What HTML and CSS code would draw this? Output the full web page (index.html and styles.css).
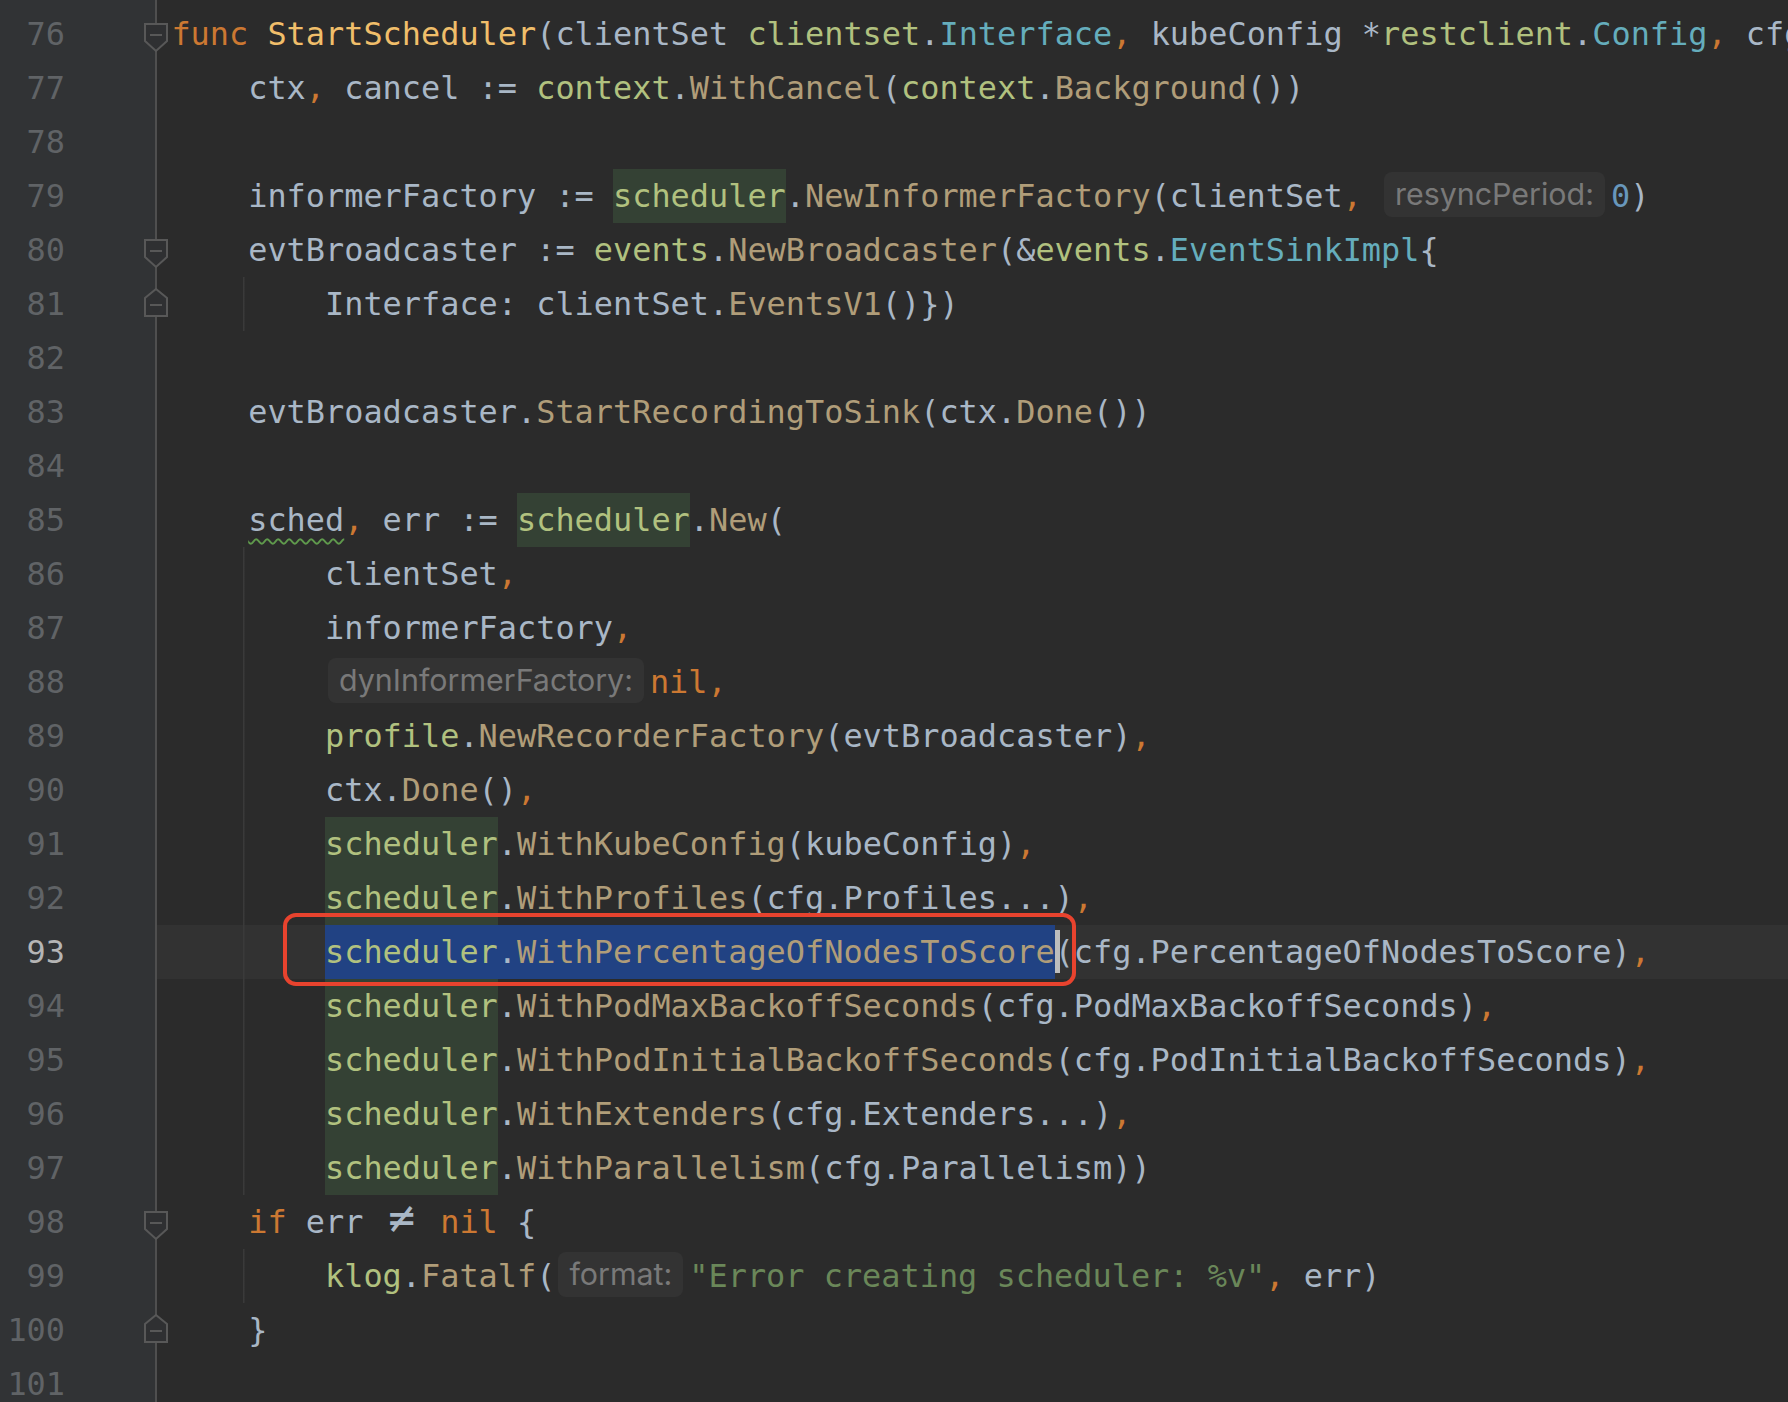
FILE: index.html
```html
<!DOCTYPE html>
<html>
  <head>
    <meta charset="utf-8" />
    <link rel="stylesheet" href="styles.css">
  </head>
  <body>
    <div class="editor">
      <div class="row"><div class="gutter"><span class="ln">76</span><svg class="fold fold-down" width="26" height="30" viewBox="0 0 26 30"><path d="M2 1H24V18L13 28L2 18Z"/><line x1="7" y1="12" x2="19" y2="12"/></svg></div><div class="code"><span class="k">func</span> <span class="fn">StartScheduler</span>(clientSet <span class="pk">clientset</span>.<span class="ty">Interface</span><span class="p">,</span> kubeConfig *<span class="pk">restclient</span>.<span class="ty">Config</span><span class="p">,</span> cfg *<span class="pk">kubeschedulerconfig</span>.<span class="ty">CompletedConfig</span>) {</div></div>
      <div class="row"><div class="gutter"><span class="ln">77</span></div><div class="code">    ctx<span class="p">,</span> cancel := <span class="pk">context</span>.<span class="fc">WithCancel</span>(<span class="pk">context</span>.<span class="fc">Background</span>())</div></div>
      <div class="row"><div class="gutter"><span class="ln">78</span></div><div class="code"></div></div>
      <div class="row"><div class="gutter"><span class="ln">79</span></div><div class="code">    informerFactory := <span class="pk hl">scheduler</span>.<span class="fc">NewInformerFactory</span>(clientSet<span class="p">,</span> <span class="hint">resyncPeriod:</span><span class="n">0</span>)</div></div>
      <div class="row"><div class="gutter"><span class="ln">80</span><svg class="fold fold-down" width="26" height="30" viewBox="0 0 26 30"><path d="M2 1H24V18L13 28L2 18Z"/><line x1="7" y1="12" x2="19" y2="12"/></svg></div><div class="code">    evtBroadcaster := <span class="pk">events</span>.<span class="fc">NewBroadcaster</span>(&amp;<span class="pk">events</span>.<span class="ty">EventSinkImpl</span>{</div></div>
      <div class="row"><div class="gutter"><span class="ln">81</span><svg class="fold fold-up" width="26" height="30" viewBox="0 0 26 30"><path d="M13 1L24 10V28H2V10Z"/><line x1="7" y1="17" x2="19" y2="17"/></svg></div><div class="code guide">        Interface: clientSet.<span class="fc">EventsV1</span>()})</div></div>
      <div class="row"><div class="gutter"><span class="ln">82</span></div><div class="code"></div></div>
      <div class="row"><div class="gutter"><span class="ln">83</span></div><div class="code">    evtBroadcaster.<span class="fc">StartRecordingToSink</span>(ctx.<span class="fc">Done</span>())</div></div>
      <div class="row"><div class="gutter"><span class="ln">84</span></div><div class="code"></div></div>
      <div class="row"><div class="gutter"><span class="ln">85</span></div><div class="code">    <span class="warn">sched</span><span class="p">,</span> err := <span class="pk hl">scheduler</span>.<span class="fc">New</span>(</div></div>
      <div class="row"><div class="gutter"><span class="ln">86</span></div><div class="code guide">        clientSet<span class="p">,</span></div></div>
      <div class="row"><div class="gutter"><span class="ln">87</span></div><div class="code guide">        informerFactory<span class="p">,</span></div></div>
      <div class="row"><div class="gutter"><span class="ln">88</span></div><div class="code guide">        <span class="hint">dynInformerFactory:</span><span class="k">nil</span><span class="p">,</span></div></div>
      <div class="row"><div class="gutter"><span class="ln">89</span></div><div class="code guide">        <span class="pk">profile</span>.<span class="fc">NewRecorderFactory</span>(evtBroadcaster)<span class="p">,</span></div></div>
      <div class="row"><div class="gutter"><span class="ln">90</span></div><div class="code guide">        ctx.<span class="fc">Done</span>()<span class="p">,</span></div></div>
      <div class="row"><div class="gutter"><span class="ln">91</span></div><div class="code guide">        <span class="pk hl">scheduler</span>.<span class="fc">WithKubeConfig</span>(kubeConfig)<span class="p">,</span></div></div>
      <div class="row"><div class="gutter"><span class="ln">92</span></div><div class="code guide">        <span class="pk hl">scheduler</span>.<span class="fc">WithProfiles</span>(cfg.Profiles...)<span class="p">,</span></div></div>
      <div class="row"><div class="gutter"><span class="ln current">93</span></div><div class="code guide current-line">        <span class="sel"><span class="pk">scheduler</span>.<span class="fc">WithPercentageOfNodesToScore</span></span><span class="caret"></span>(cfg.PercentageOfNodesToScore)<span class="p">,</span></div></div>
      <div class="row"><div class="gutter"><span class="ln">94</span></div><div class="code guide">        <span class="pk hl">scheduler</span>.<span class="fc">WithPodMaxBackoffSeconds</span>(cfg.PodMaxBackoffSeconds)<span class="p">,</span></div></div>
      <div class="row"><div class="gutter"><span class="ln">95</span></div><div class="code guide">        <span class="pk hl">scheduler</span>.<span class="fc">WithPodInitialBackoffSeconds</span>(cfg.PodInitialBackoffSeconds)<span class="p">,</span></div></div>
      <div class="row"><div class="gutter"><span class="ln">96</span></div><div class="code guide">        <span class="pk hl">scheduler</span>.<span class="fc">WithExtenders</span>(cfg.Extenders...)<span class="p">,</span></div></div>
      <div class="row"><div class="gutter"><span class="ln">97</span></div><div class="code guide">        <span class="pk hl">scheduler</span>.<span class="fc">WithParallelism</span>(cfg.Parallelism))</div></div>
      <div class="row"><div class="gutter"><span class="ln">98</span><svg class="fold fold-down" width="26" height="30" viewBox="0 0 26 30"><path d="M2 1H24V18L13 28L2 18Z"/><line x1="7" y1="12" x2="19" y2="12"/></svg></div><div class="code">    <span class="k">if</span> err <span class="neq">≠</span> <span class="k">nil</span> {</div></div>
      <div class="row"><div class="gutter"><span class="ln">99</span></div><div class="code guide">        <span class="pk">klog</span>.<span class="fc">Fatalf</span>(<span class="hint">format:</span><span class="s">"Error creating scheduler: %v"</span><span class="p">,</span> err)</div></div>
      <div class="row"><div class="gutter"><span class="ln">100</span><svg class="fold fold-up" width="26" height="30" viewBox="0 0 26 30"><path d="M13 1L24 10V28H2V10Z"/><line x1="7" y1="17" x2="19" y2="17"/></svg></div><div class="code">    }</div></div>
      <div class="row"><div class="gutter"><span class="ln">101</span></div><div class="code"></div></div>

      <div class="annotation"></div>
    </div>
  </body>
</html>
```

FILE: styles.css
```css
body {
  margin: 0;
  padding: 0;
  width: 1788px;
  height: 1402px;
  overflow: hidden;
  background: #2b2b2b;
}

.editor {
  position: relative;
  height: 1402px;
  padding-top: 7px;
  box-sizing: border-box;
  overflow: hidden;
  background: linear-gradient(
    to right,
    #313335 0,
    #313335 155px,
    #4f4f4f 155px,
    #4f4f4f 157px,
    #2b2b2b 157px
  );
  font-family: "DejaVu Sans Mono", monospace;
  font-size: 31.9px;
  line-height: 54px;
  color: #a9b7c6;
}

.row {
  display: flex;
  height: 54px;
}

.gutter {
  position: relative;
  flex: 0 0 157px;
}

.ln {
  display: block;
  width: 65px;
  text-align: right;
  color: #606366;
}

.ln.current {
  color: #b5b5b5;
}

/* fold markers sit over the gutter edge */
.fold {
  position: absolute;
  left: 143px;
  fill: #2f3032;
  stroke: #585858;
  stroke-width: 2;
}

.fold-down {
  top: 16px;
}

.fold-up {
  top: 11px;
}

.code {
  flex: 1;
  padding-left: 14.4px;
  white-space: pre;
  overflow: hidden;
}

.code.guide {
  background: linear-gradient(#3a3a3a, #3a3a3a) no-repeat 86px 0 / 1.5px 100%;
}

.code.current-line {
  background: linear-gradient(#3a3a3a, #3a3a3a) no-repeat 86px 0 / 1.5px 100%,
    #323232;
}

/* syntax colours */
.k {
  color: #cc7832;
}

.p {
  color: #cc7832;
}

.fn {
  color: #f0be6a;
}

.pk {
  color: #b1c17f;
}

.fc {
  color: #b09d79;
}

.ty {
  color: #65adbc;
}

.s {
  color: #6a8759;
}

.n {
  color: #6897bb;
}

.hl {
  display: inline-block;
  background: #344134;
}

.sel {
  display: inline-block;
  background: #214283;
}

.caret {
  display: inline-block;
  width: 5px;
  height: 43px;
  margin: 5px -5px 0 0;
  vertical-align: top;
  background: #bdbdbd;
}

.warn {
  text-decoration: underline wavy #5f9a4c;
  text-decoration-thickness: 2px;
  text-underline-offset: 7px;
}

.neq {
  display: inline-block;
  width: 38.4px;
  text-align: center;
  font-size: 1.4em;
  line-height: 54px;
  vertical-align: top;
  margin-top: -4px;
}

.hint {
  display: inline-block;
  height: 45px;
  margin: 3px 6px 0 3px;
  padding: 0 11px;
  vertical-align: top;
  border-radius: 8px;
  background: #333333;
  color: #797979;
  font-family: Inter, "Noto Sans", sans-serif;
  font-size: 30.4px;
  line-height: 45px;
}

.annotation {
  position: absolute;
  left: 283px;
  top: 913px;
  width: 793px;
  height: 73px;
  box-sizing: border-box;
  border: 4px solid #e8432e;
  border-radius: 13px;
}
```
